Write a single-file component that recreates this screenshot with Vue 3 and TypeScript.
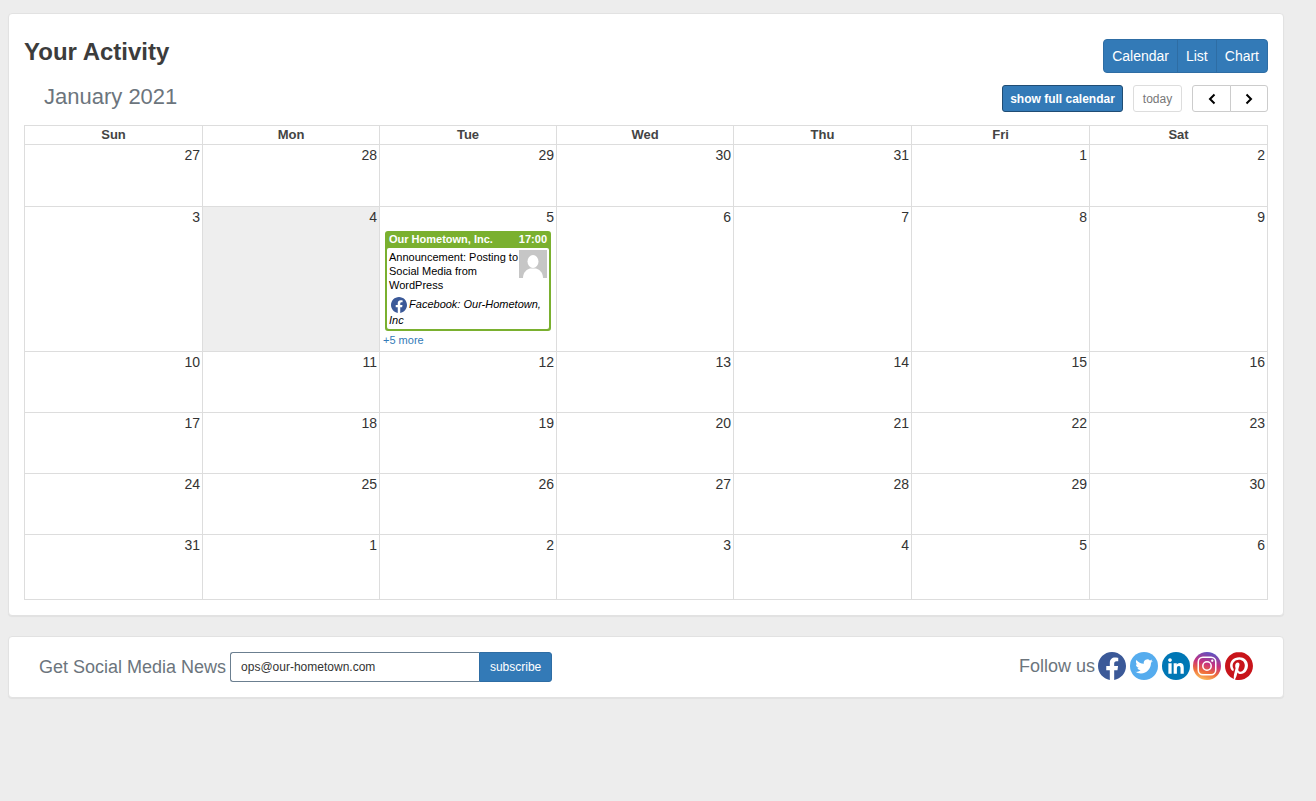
<script setup lang="ts">
const days: string[] = ['Sun', 'Mon', 'Tue', 'Wed', 'Thu', 'Fri', 'Sat']
const weeks: number[][] = [
  [27, 28, 29, 30, 31, 1, 2],
  [3, 4, 5, 6, 7, 8, 9],
  [10, 11, 12, 13, 14, 15, 16],
  [17, 18, 19, 20, 21, 22, 23],
  [24, 25, 26, 27, 28, 29, 30],
  [31, 1, 2, 3, 4, 5, 6],
]
const rowHeights: number[] = [62, 145, 61, 61, 61, 65]
const colWidths: number[] = [178, 177, 177, 177, 178, 178, 178]
</script>

<template>
  <div class="page">
    <section class="card activity">
      <div class="top-row">
        <h2 class="title">Your Activity</h2>
        <div class="view-group">
          <button class="view-btn">Calendar</button>
          <button class="view-btn">List</button>
          <button class="view-btn">Chart</button>
        </div>
      </div>
      <div class="toolbar">
        <div class="month">January 2021</div>
        <div class="tools">
          <button class="full-btn">show full calendar</button>
          <button class="today-btn">today</button>
          <div class="nav-group">
            <button class="nav-btn">
              <svg width="10" height="12" viewBox="0 0 10 12"><path d="M7.500 1.500 3 6l4.500 4.500" fill="none" stroke="#000" stroke-width="2" /></svg>
            </button>
            <button class="nav-btn">
              <svg width="10" height="12" viewBox="0 0 10 12"><path d="M2.500 1.500 7 6l-4.500 4.500" fill="none" stroke="#000" stroke-width="2" /></svg>
            </button>
          </div>
        </div>
      </div>
      <table class="calendar">
        <colgroup>
          <col v-for="(w, i) in colWidths" :key="i" :style="{ width: w + 'px' }" />
        </colgroup>
        <thead>
          <tr>
            <th v-for="d in days" :key="d">{{ d }}</th>
          </tr>
        </thead>
        <tbody>
          <tr v-for="(week, r) in weeks" :key="r" :style="{ height: rowHeights[r] + 'px' }">
            <td v-for="(n, c) in week" :key="c" :class="{ today: r === 1 && c === 1 }">
              <div class="num">{{ n }}</div>
              <template v-if="r === 1 && c === 2">
                <div class="event">
                  <div class="event-head"><span>Our Hometown, Inc.</span><span>17:00</span></div>
                  <div class="event-body">
                    <svg class="thumb" width="28" height="28" viewBox="0 0 28 28">
                      <rect width="28" height="28" fill="#c6c6c6" />
                      <ellipse cx="14" cy="11.500" rx="5.500" ry="6.500" fill="#fff" />
                      <path d="M4 28c0-6 4-8.500 7-9.500h6c3 1 7 3.500 7 9.500z" fill="#fff" />
                    </svg>
                    <div class="event-text">Announcement: Posting to Social Media from WordPress</div>
                    <div class="event-net">
                      <svg class="net-icon" width="16" height="16" viewBox="0 0 24 24">
                        <circle cx="12" cy="12" r="12" fill="#fff" />
                        <path fill="#3b5998" d="M24 12.073c0-6.627-5.373-12-12-12s-12 5.373-12 12c0 5.990 4.388 10.954 10.125 11.854v-8.385H7.078v-3.470h3.047V9.430c0-3.007 1.792-4.669 4.533-4.669 1.312 0 2.686.235 2.686.235v2.953H15.830c-1.491 0-1.956.925-1.956 1.874v2.250h3.328l-.532 3.470h-2.796v8.385C19.612 23.027 24 18.062 24 12.073z" />
                      </svg>
                      Facebook: Our-Hometown, Inc
                    </div>
                  </div>
                </div>
                <div class="more">+5 more</div>
              </template>
            </td>
          </tr>
        </tbody>
      </table>
    </section>

    <section class="card news">
      <div class="subscribe">
        <span class="label">Get Social Media News</span>
        <div class="field">ops@our-hometown.com</div>
        <button class="sub-btn">subscribe</button>
      </div>
      <div class="follow">
        <span class="label follow-label">Follow us</span>
        <div class="icons">
          <svg width="28" height="28" viewBox="0 0 24 24">
            <circle cx="12" cy="12" r="12" fill="#fff" />
            <path fill="#3b5998" d="M24 12.073c0-6.627-5.373-12-12-12s-12 5.373-12 12c0 5.990 4.388 10.954 10.125 11.854v-8.385H7.078v-3.470h3.047V9.430c0-3.007 1.792-4.669 4.533-4.669 1.312 0 2.686.235 2.686.235v2.953H15.830c-1.491 0-1.956.925-1.956 1.874v2.250h3.328l-.532 3.470h-2.796v8.385C19.612 23.027 24 18.062 24 12.073z" />
          </svg>
          <svg width="28" height="28" viewBox="0 0 24 24">
            <circle cx="12" cy="12" r="12" fill="#55acee" />
            <path transform="translate(4.500 4.800) scale(.625)" fill="#fff" d="M23.953 4.570a10 10 0 01-2.825.775 4.958 4.958 0 002.163-2.723c-.951.555-2.005.959-3.127 1.184a4.920 4.920 0 00-8.384 4.482C7.690 8.095 4.067 6.130 1.640 3.162a4.822 4.822 0 00-.666 2.475c0 1.710.870 3.213 2.188 4.096a4.904 4.904 0 01-2.228-.616v.060a4.923 4.923 0 003.946 4.827 4.996 4.996 0 01-2.212.085 4.936 4.936 0 004.604 3.417 9.867 9.867 0 01-6.102 2.105c-.390 0-.779-.023-1.170-.067a13.995 13.995 0 007.557 2.209c9.053 0 13.998-7.496 13.998-13.985 0-.210 0-.420-.015-.630A9.935 9.935 0 0024 4.590z" />
          </svg>
          <svg width="28" height="28" viewBox="0 0 24 24">
            <circle cx="12" cy="12" r="12" fill="#0077b5" />
            <path transform="translate(2.700 2.700) scale(.78)" fill="#fff" d="M20.447 20.452h-3.554v-5.569c0-1.328-.027-3.037-1.852-3.037-1.853 0-2.136 1.445-2.136 2.939v5.667H9.351V9h3.414v1.561h.046c.477-.9 1.637-1.850 3.370-1.850 3.601 0 4.267 2.370 4.267 5.455v6.286zM5.337 7.433c-1.144 0-2.063-.926-2.063-2.065 0-1.138.920-2.063 2.063-2.063 1.140 0 2.064.925 2.064 2.063 0 1.139-.925 2.065-2.064 2.065zm1.782 13.019H3.555V9h3.564v11.452z" />
          </svg>
          <svg width="28" height="28" viewBox="0 0 24 24">
            <defs>
              <linearGradient id="ig" x1="0.300" y1="1" x2="0.600" y2="0">
                <stop offset="0" stop-color="#fdc35f" />
                <stop offset="0.300" stop-color="#ee6a3a" />
                <stop offset="0.600" stop-color="#c6307f" />
                <stop offset="1" stop-color="#5b53c4" />
              </linearGradient>
            </defs>
            <circle cx="12" cy="12" r="12" fill="url(#ig)" />
            <rect x="4.500" y="4.500" width="15" height="15" rx="4" fill="none" stroke="#fff" stroke-width="1.300" />
            <circle cx="12" cy="12" r="3.600" fill="none" stroke="#fff" stroke-width="1.300" />
            <circle cx="16.500" cy="7.500" r="1" fill="#fff" />
          </svg>
          <svg width="28" height="28" viewBox="0 0 24 24">
            <circle cx="12" cy="12" r="11.500" fill="#fff" />
            <path fill="#c8141a" d="M12.017 0C5.396 0 .029 5.367.029 11.987c0 5.079 3.158 9.417 7.618 11.162-.105-.949-.199-2.403.041-3.439.219-.937 1.406-5.957 1.406-5.957s-.359-.720-.359-1.781c0-1.663.967-2.911 2.168-2.911 1.024 0 1.518.769 1.518 1.688 0 1.029-.653 2.567-.992 3.992-.285 1.193.6 2.165 1.775 2.165 2.128 0 3.768-2.245 3.768-5.487 0-2.861-2.063-4.869-5.008-4.869-3.410 0-5.409 2.562-5.409 5.199 0 1.033.394 2.143.889 2.741.099.120.112.225.085.345-.09.375-.293 1.199-.334 1.363-.053.225-.172.271-.401.165-1.495-.690-2.433-2.878-2.433-4.646 0-3.776 2.748-7.252 7.920-7.252 4.158 0 7.392 2.967 7.392 6.923 0 4.135-2.607 7.462-6.233 7.462-1.214 0-2.354-.629-2.758-1.379l-.749 2.848c-.269 1.045-1.004 2.352-1.498 3.146 1.123.345 2.306.535 3.550.535 6.607 0 11.985-5.365 11.985-11.987C23.970 5.390 18.592.026 11.985.026L12.017 0z" />
          </svg>
        </div>
      </div>
    </section>
  </div>
</template>

<style>
html,
body {
  margin: 0;
  background: #ededed;
}
</style>

<style scoped>
.page {
  box-sizing: border-box;
  width: 1316px;
  height: 801px;
  padding: 13px 32px 0 8px;
  background: #ededed;
  font-family: "Liberation Sans", Arial, sans-serif;
  color: #333;
  overflow: hidden;
}
.card {
  box-sizing: border-box;
  background: #fff;
  border: 1px solid #e2e2e2;
  border-radius: 4px;
  box-shadow: 0 1px 1px rgba(0, 0, 0, 0.05);
}
.activity {
  height: 603px;
  padding: 25px 15px 0;
}
.top-row {
  display: flex;
  justify-content: space-between;
  align-items: flex-start;
  height: 34px;
}
.title {
  margin: 0;
  font-size: 24px;
  line-height: 26px;
  font-weight: 700;
  color: #3c3c3c;
}
.view-group {
  display: flex;
}
.view-btn {
  height: 34px;
  padding: 0 8px;
  margin-left: -1px;
  font: 14px "Liberation Sans", Arial, sans-serif;
  color: #fff;
  background: #337ab7;
  border: 1px solid #2e6da4;
}
.view-btn:first-child {
  border-radius: 4px 0 0 4px;
  margin-left: 0;
}
.view-btn:last-child {
  border-radius: 0 4px 4px 0;
}
.toolbar {
  display: flex;
  justify-content: space-between;
  align-items: flex-start;
  height: 27px;
  margin-top: 12px;
}
.month {
  padding-left: 20px;
  font-size: 22px;
  line-height: 23px;
  color: #6c757d;
}
.tools {
  display: flex;
  align-items: center;
}
.full-btn {
  width: 121px;
  height: 27px;
  padding: 0;
  font: 700 12px "Liberation Sans", Arial, sans-serif;
  color: #fff;
  background: #337ab7;
  border: 1px solid #204d74;
  border-radius: 3px;
}
.today-btn {
  width: 49px;
  height: 27px;
  margin-left: 10px;
  padding: 0;
  font: 12px "Liberation Sans", Arial, sans-serif;
  color: #777;
  background: #fff;
  border: 1px solid #ddd;
  border-radius: 3px;
}
.nav-group {
  display: flex;
  margin-left: 10px;
}
.nav-btn {
  display: flex;
  align-items: center;
  justify-content: center;
  width: 39px;
  height: 27px;
  padding: 0;
  background: #fff;
  border: 1px solid #ccc;
}
.nav-btn:first-child {
  border-radius: 3px 0 0 3px;
}
.nav-btn:last-child {
  margin-left: -1px;
  width: 38px;
  border-radius: 0 3px 3px 0;
}
.calendar {
  width: 1244px;
  margin-top: 13px;
  border-collapse: collapse;
  table-layout: fixed;
}
.calendar th,
.calendar td {
  border: 1px solid #ddd;
  padding: 0;
  vertical-align: top;
}
.calendar th {
  height: 18px;
  font-size: 13px;
  line-height: 18px;
  font-weight: 700;
  color: #444;
}
.calendar td.today {
  background: #eee;
}
.num {
  height: 21px;
  padding-right: 2px;
  font-size: 14px;
  line-height: 20px;
  text-align: right;
  color: #333;
}
.event {
  box-sizing: border-box;
  height: 100px;
  margin: 3px 5px 0;
  background: #7ab02f;
  border: 2px solid #7ab02f;
  border-radius: 3px;
  font-size: 11px;
  color: #000;
}
.event-head {
  display: flex;
  justify-content: space-between;
  height: 15px;
  padding: 0 2px;
  font-weight: 700;
  line-height: 13px;
  color: #fff;
}
.event-body {
  box-sizing: border-box;
  height: 81px;
  padding: 2px;
  background: #fff;
  border-radius: 2px;
}
.thumb {
  float: right;
}
.event-text {
  line-height: 14px;
}
.event-net {
  margin-top: 4px;
  font-style: italic;
  line-height: 16px;
}
.net-icon {
  margin: 0 -1px -1px 2px;
  vertical-align: -4px;
}
.more {
  padding: 2px 0 0 3px;
  font-size: 11px;
  line-height: 14px;
  color: #337ab7;
}
.news {
  display: flex;
  justify-content: space-between;
  height: 62px;
  margin-top: 20px;
  padding: 15px 30px 0;
}
.subscribe {
  display: flex;
  align-items: flex-start;
}
.label {
  font-size: 18px;
  line-height: 30px;
  color: #6c757d;
}
.field {
  box-sizing: border-box;
  width: 249px;
  height: 30px;
  margin-left: 4px;
  padding-left: 10px;
  font-size: 12px;
  line-height: 28px;
  color: #333;
  border: 1px solid #6b7f90;
  border-right: 0;
  border-radius: 3px 0 0 3px;
}
.sub-btn {
  width: 73px;
  height: 30px;
  padding: 0;
  font: 12px "Liberation Sans", Arial, sans-serif;
  color: #fff;
  background: #337ab7;
  border: 1px solid #2e6da4;
  border-radius: 0 3px 3px 0;
}
.follow {
  display: flex;
  align-items: flex-start;
}
.follow-label {
  line-height: 28px;
  margin-right: 3px;
}
.icons {
  display: flex;
  gap: 3.750px;
}
</style>
